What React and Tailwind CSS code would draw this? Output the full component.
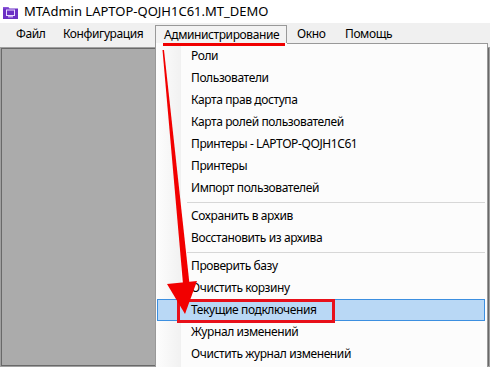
import React from "react";

const items1 = [
  "Роли",
  "Пользователи",
  "Карта прав доступа",
  "Карта ролей пользователей",
  "Принтеры - LAPTOP-QOJH1C61",
  "Принтеры",
  "Импорт пользователей",
];
const items2 = ["Сохранить в архив", "Восстановить из архива"];
const items3 = ["Проверить базу", "Очистить корзину"];
const items4 = ["Журнал изменений", "Очистить журнал изменений"];

function Item({ text, active }) {
  return (
    <div
      className={
        "h-[22px] ml-[1px] mr-[2px] flex items-center pl-[33px] border " +
        (active ? "bg-[#b9d8f5] border-[#3c8fe0]" : "border-transparent")
      }
    >
      <span className="leading-none">{text}</span>
    </div>
  );
}

function Sep() {
  return (
    <div className="h-[6px] flex items-center ml-[31px] mr-[2px]">
      <div className="h-[1px] w-full bg-[#d7d7d7]" />
    </div>
  );
}

export default function App() {
  return (
    <div className="w-[490px] h-[367px] relative overflow-hidden bg-white flex flex-col font-['Noto_Sans',sans-serif] text-black">
      {/* Title bar */}
      <div className="h-[23px] flex items-center pl-[3px] shrink-0">
        <svg width="15" height="13" viewBox="0 0 15 13" className="mt-[1px]">
          <path d="M0 1 H5 L6.5 2.5 H15 V13 H0 Z" fill="#6b2fc4" />
          <path d="M0 1 H5 L6.5 2.5 H0 Z" fill="#8a55d8" />
          <rect x="3.5" y="4" width="8" height="5.5" fill="none" stroke="#e9dcff" strokeWidth="1" />
          <rect x="5" y="10.3" width="5" height="1" fill="#e9dcff" />
        </svg>
        <span className="ml-[6px] text-[13px] leading-none">MTAdmin LAPTOP-QOJH1C61.MT_DEMO</span>
      </div>

      {/* Menu bar */}
      <div className="h-[22px] bg-[#f0f0f0] flex items-stretch pl-[8px] text-[12px] tracking-[-0.4px] shrink-0">
        <div className="w-[47px] pl-[8px] flex items-center">Файл</div>
        <div className="w-[100px] pl-[8px] flex items-center">Конфигурация</div>
        <div className="w-[132px] pl-[8px] flex items-center mt-[2px] border-t border-l border-r border-[#999999] bg-[#f3f3f3] pb-[2px]">
          Администрирование
        </div>
        <div className="w-[50px] pl-[10px] flex items-center">Окно</div>
        <div className="pl-[8px] flex items-center">Помощь</div>
      </div>

      <div className="h-[2px] bg-[#f0f0f0] shrink-0" />

      {/* MDI client */}
      <div className="flex-1 border border-[#a0a0a0]">
        <div className="w-full h-full border border-[#696969] bg-[#ababab]" />
      </div>

      {/* Dropdown menu */}
      <div className="absolute left-[155px] top-[43px] w-[333px] h-[330px] bg-[#fcfcfc] border-l border-r border-[#999999] text-[12px] tracking-[-0.4px] pt-[2px]">
        <div className="absolute left-0 top-0 w-[25px] h-full bg-gradient-to-r from-[#fdfdfd] to-[#f1f1f1]" />
        <div className="relative">
          {items1.map((t) => (
            <Item key={t} text={t} />
          ))}
          <Sep />
          {items2.map((t) => (
            <Item key={t} text={t} />
          ))}
          <Sep />
          {items3.map((t) => (
            <Item key={t} text={t} />
          ))}
          <Item text="Текущие подключения" active />
          {items4.map((t) => (
            <Item key={t} text={t} />
          ))}
        </div>
      </div>
      <div className="absolute left-[287px] top-[43px] w-[201px] h-[1px] bg-[#999999]" />

      {/* Annotations */}
      <div className="absolute left-[163px] top-[43px] w-[122px] h-[3px] bg-[#f00000]" />
      <div className="absolute left-[177px] top-[299px] w-[158px] h-[24px] border-[3px] border-[#e8101a]" />
      <svg className="absolute left-0 top-0 pointer-events-none" width="490" height="367" viewBox="0 0 490 367">
        <polygon points="162.5,50 164,50 189.5,284 183,284" fill="#f20000" />
        <polygon points="167,284 197,281 185,314" fill="#f20000" />
      </svg>
    </div>
  );
}
